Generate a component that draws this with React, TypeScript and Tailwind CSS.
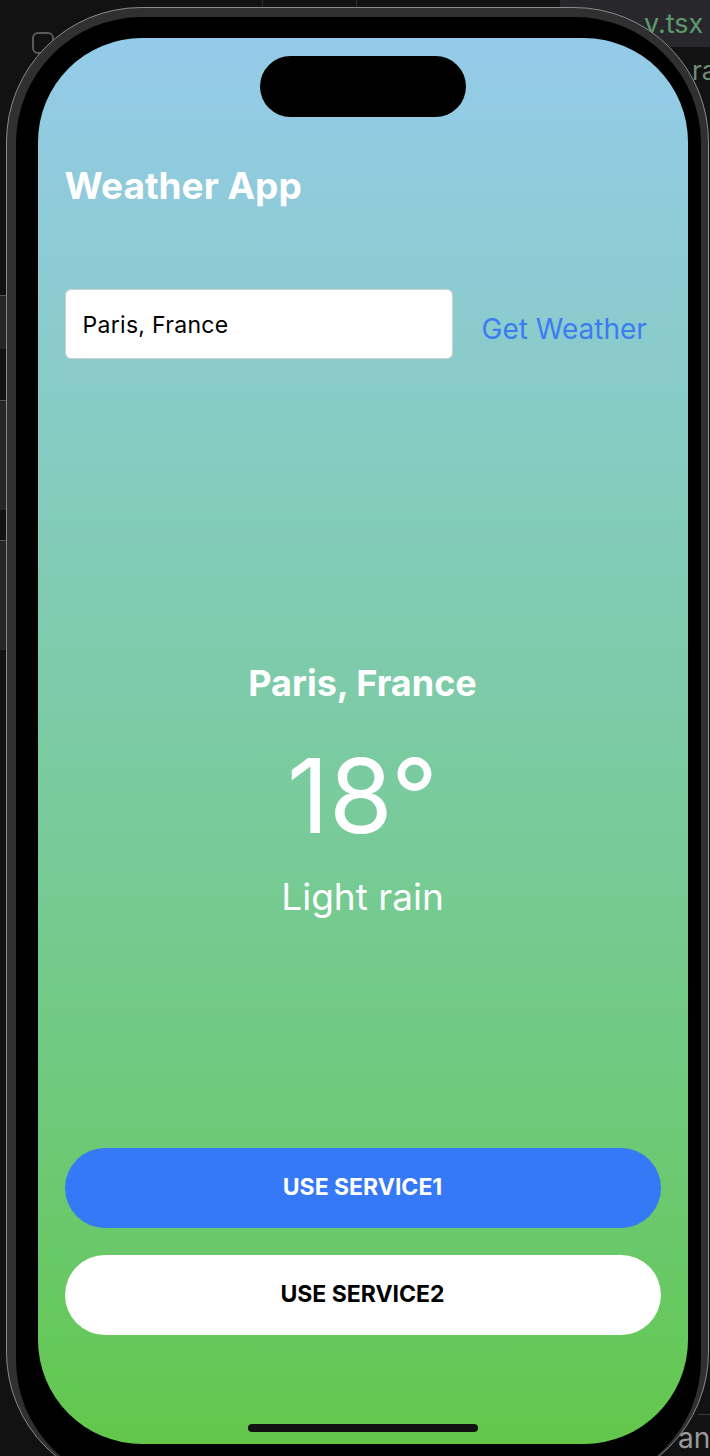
import React from 'react'

export default function App() {
  return (
    <div className="relative h-[1456px] w-[710px] overflow-hidden bg-[#121212] font-['Inter',sans-serif]">
      {/* editor bits behind the device */}
      <div className="absolute left-[262px] top-0 h-[30px] w-px bg-[#2e2e2e]" />
      <div className="absolute left-[356px] top-0 h-[30px] w-px bg-[#2e2e2e]" />
      <div className="absolute left-[560px] top-0 h-[47px] w-[150px] bg-[#28282c]" />
      <div className="absolute left-[644px] top-[6px] whitespace-nowrap pt-[4px] text-[27px] leading-none text-[#5e9a6e]">y.tsx</div>
      <div className="absolute left-[692px] top-[58px] text-[26px] leading-none text-[#6f8f78]">ra</div>
      <div className="absolute left-[32px] top-[32px] h-[22px] w-[22px] rounded-[6px] border-2 border-[#5a5a5a]" />
      <div className="absolute left-0 top-[295px] h-[54px] w-[12px] border-t border-[#555] bg-[#262626]" />
      <div className="absolute left-0 top-[400px] h-[110px] w-[12px] border-t border-[#555] bg-[#262626]" />
      <div className="absolute left-0 top-[540px] h-[110px] w-[12px] border-t border-[#555] bg-[#262626]" />
      <div className="absolute left-[698px] top-[1414px] h-px w-[12px] bg-[#3a3a3a]" />
      <div className="absolute left-[678px] top-[1424px] whitespace-nowrap text-[28px] leading-none text-[#9a9a9a]">anc</div>

      {/* device frame */}
      <div className="relative z-10 ml-[6px] mt-[7px] h-[1480px] w-[703px] rounded-[135px] border-[1.5px] border-[#8a8a8a] bg-[#303030] pl-[8.5px] pr-[7px] pt-[8.5px]">
        <div className="h-full rounded-[126px] bg-black pl-[22px] pr-[12px] pt-[21px]">
          <div className="flex h-[1406px] w-[650px] flex-col overflow-hidden rounded-[104px] bg-gradient-to-b from-[#95cbea] to-[#63c74b] px-[27px]">
            {/* dynamic island */}
            <div className="mx-auto mt-[18px] h-[61px] w-[206px] shrink-0 rounded-full bg-black" />

            <h1 className="mt-[50px] text-[37px] font-bold leading-none text-white">Weather App</h1>

            <div className="mt-[85px] flex items-center">
              <div className="flex h-[70px] w-[388px] items-center rounded-[6px] border-[1.5px] border-[#cfcfcf] bg-white pl-[17px] pt-[3px] text-[23px] tracking-[0.3px] text-black">
                Paris, France
              </div>
              <button className="ml-[29px] mt-[10px] text-[28px] leading-none text-[#3b7cf3]">Get Weather</button>
            </div>

            <div className="mt-[306px] flex flex-col items-center text-white">
              <div className="text-[36px] font-bold leading-none">Paris, France</div>
              <div className="mt-[43px] text-[103px] font-normal leading-none">18°</div>
              <div className="mt-[31px] text-[37px] leading-none">Light rain</div>
            </div>

            <button className="mt-[233px] h-[80px] w-full shrink-0 rounded-full bg-[#3579f6] text-[23px] font-bold text-white">
              USE SERVICE1
            </button>
            <button className="mt-[27px] h-[80px] w-full shrink-0 rounded-full bg-white text-[23px] font-bold text-black">
              USE SERVICE2
            </button>

            <div className="mx-auto mb-[12px] mt-auto h-[8px] w-[230px] shrink-0 rounded-full bg-[#111]" />
          </div>
        </div>
      </div>
    </div>
  )
}
